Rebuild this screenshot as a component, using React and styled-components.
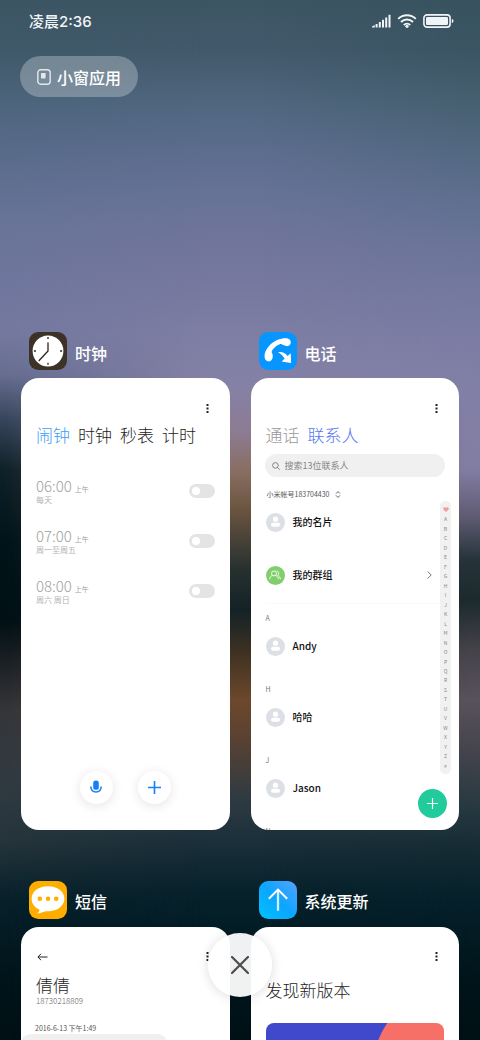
import React from "react";
import styled, { createGlobalStyle, css } from "styled-components";

const GlobalStyle = createGlobalStyle`
	* {
		box-sizing: border-box;
	}
	body {
		margin: 0;
		background: #00131a;
		font-family: "Noto Sans CJK SC", "Noto Sans", sans-serif;
	}
	button,
	input {
		font-family: inherit;
		border: none;
		padding: 0;
		margin: 0;
	}
	h1, h2, p, ul {
		margin: 0;
		padding: 0;
	}
	svg {
		display: block;
	}
`;

// page
const Screen = styled.div`
	position: relative;
	isolation: isolate;
	height: 100vh;
	overflow: hidden;
	/* wallpaper: centre column, the sides are laid over it */
	background: linear-gradient(
		180deg,
		#3c5563 0,
		#42596b 50px,
		#50677f 105px,
		#5c6d8e 150px,
		#677297 195px,
		#70759c 240px,
		#77799f 290px,
		#7d7ea4 330px,
		#8581a6 385px,
		#8c7c94 430px,
		#8a6e63 470px,
		#6a543f 510px,
		#26302f 570px,
		#142226 610px,
		#3c3022 650px,
		#6c482c 700px,
		#5c4231 735px,
		#2e3a42 800px,
		#1b303a 840px,
		#08222c 890px,
		#001a23 950px,
		#001014 1040px
	);

	&::before,
	&::after {
		content: "";
		position: absolute;
		z-index: -1;
		inset: 0;
	}
	&::before {
		background: linear-gradient(
			180deg,
			#3c5563 0,
			#3f596a 50px,
			#4d657d 105px,
			#5a6c8c 160px,
			#687397 220px,
			#6f769d 280px,
			#74789e 335px,
			#666d91 375px,
			#36455a 420px,
			#0e2029 470px,
			#001419 540px,
			#001014 620px,
			#1d2126 665px,
			#343539 710px,
			#303a41 780px,
			#26343b 840px,
			#06202a 900px,
			#00141a 980px,
			#001014 1040px
		);
		mask-image: linear-gradient(90deg, #000 1%, transparent 42%);
	}
	&::after {
		background: linear-gradient(
			180deg,
			#38535f 0,
			#3b5564 50px,
			#465f70 100px,
			#526880 150px,
			#5f6f90 200px,
			#6c7599 250px,
			#7579a0 300px,
			#7c7da4 345px,
			#827fa6 400px,
			#817ca2 470px,
			#615d75 515px,
			#26333a 560px,
			#1c2a2d 600px,
			#45424a 650px,
			#58525b 700px,
			#45444d 750px,
			#253840 810px,
			#142b33 850px,
			#05202a 900px,
			#00141a 980px,
			#001014 1040px
		);
		mask-image: linear-gradient(90deg, transparent 55%, #000 98%);
	}
`;

const StatusBar = styled.header`
	display: flex;
	align-items: center;
	justify-content: space-between;
	height: 42px;
	padding: 0 26px 0 29px;
	color: #f1f4f6;
`;

const StatusTime = styled.span`
	padding-top: 2px;
	font-family: Inter, "Noto Sans CJK SC", sans-serif;
	font-size: 15px;
	font-weight: 500;
	line-height: 20px;
`;

const StatusIcons = styled.div`
	display: flex;
	align-items: center;
	gap: 6px;
`;

const WindowButton = styled.button`
	display: flex;
	align-items: center;
	gap: 6px;
	height: 41px;
	margin: 14px 0 0 20px;
	padding: 0 17px;
	border-radius: 21px;
	background: rgba(255, 255, 255, 0.27);
	color: #fff;
	font-size: 16px;
	font-weight: 500;
`;

const Recents = styled.main`
	display: grid;
	grid-template-columns: 1fr 1fr;
	gap: 51px 21px;
	margin-top: 235px;
	padding: 0 21px;
`;

const AppTitle = styled.div`
	display: flex;
	align-items: center;
	gap: 8px;
	margin: 0 8px 8px;
	color: #fff;

	h2 {
		padding-top: 3px;
		font-size: 16px;
		font-weight: 500;
		line-height: 24px;
		white-space: nowrap;
	}
`;

const Card = styled.article`
	position: relative;
	display: flex;
	flex-direction: column;
	aspect-ratio: 6 / 13;
	min-height: 0;
	overflow: hidden;
	border-radius: 18px;
	background: #fff;
	color: #1c1c1c;
`;

const CardBar = styled.div`
	display: flex;
	align-items: center;
	height: 12px;
	margin: 24px 21px 0 16px;
`;

const IconButton = styled.button`
	display: grid;
	place-items: center;
	background: none;
	color: #222;
	margin-left: ${(props) => (props.$end ? "auto" : "0")};
`;

const Tabs = styled.nav`
	display: flex;
	gap: 8px;
	margin: 9px 0 0 15px;
`;

const Tab = styled.button`
	background: none;
	color: ${(props) => props.$color || "#1c1c1c"};
	font-size: 17px;
	font-weight: 300;
	line-height: 24px;
	white-space: nowrap;
`;

// clock
const Alarms = styled.ul`
	display: flex;
	flex-direction: column;
	gap: 22px;
	margin: 30px 15px 0;
	list-style: none;
`;

const Alarm = styled.li`
	display: flex;
	align-items: center;
	justify-content: space-between;
	color: #b2b2b2;
`;

const AlarmLabel = styled.label`
	display: flex;
	flex-direction: column;
`;

const AlarmTime = styled.span`
	display: flex;
	align-items: baseline;
	gap: 3px;
	font-size: 15px;
	font-weight: 300;
	line-height: 18px;
	color: #a0a0a0;

	small {
		font-size: 7px;
		font-weight: 400;
		line-height: 8px;
	}
`;

const AlarmDays = styled.span`
	font-size: 8px;
	line-height: 10px;
`;

const Toggle = styled.input`
	appearance: none;
	display: flex;
	align-items: center;
	width: 26px;
	height: 14px;
	padding-left: 3px;
	border-radius: 7px;
	background: #e4e4e4;

	&::before {
		content: "";
		width: 8px;
		height: 8px;
		border-radius: 50%;
		background: #fff;
	}
	&:checked {
		justify-content: flex-end;
		background: #1a82f7;
	}
`;

const ClockActions = styled.div`
	display: flex;
	justify-content: center;
	gap: 25px;
	margin: auto 0 26px;
`;

const RoundButton = styled.button`
	display: grid;
	place-items: center;
	width: 33px;
	height: 33px;
	border-radius: 50%;
	background: #fff;
	color: #1a7ff5;
	box-shadow: 0 2px 12px rgba(0, 0, 0, 0.11);
`;

// contacts
const Search = styled.label`
	display: flex;
	align-items: center;
	gap: 5px;
	height: 23px;
	margin: 7px 14px 0;
	padding: 0 7px;
	border-radius: 12px;
	background: #f0f0f0;
	color: #777;

	input {
		flex: 1;
		min-width: 0;
		background: none;
		font-size: 9px;
		line-height: 14px;
		outline: none;
	}
	input::placeholder {
		color: #858585;
		opacity: 1;
	}
`;

const Account = styled.button`
	display: flex;
	align-items: center;
	gap: 6px;
	height: 8px;
	margin: 13px 0 0 16px;
	background: none;
	color: #555;
	font-size: 7px;
	line-height: 8px;
`;

const ContactsBody = styled.div`
	display: flex;
	flex: 1;
	min-height: 0;
	padding: 0 8px 0 15px;
`;

const ContactList = styled.ul`
	flex: 1;
	list-style: none;
`;

const contactRow = css`
	display: flex;
	align-items: center;
	gap: 8px;
	font-size: 10px;
	font-weight: 500;
	line-height: 20px;
	color: #111;
`;

const Contact = styled.li`
	${contactRow}
	height: 53px;
	padding: 0 8px 4px 0;
	border-bottom: 1px solid ${(props) => (props.$ruled ? "#fafafa" : "transparent")};
`;

const ContactName = styled.span`
	flex: 1;
`;

const Letter = styled.li`
	height: 18px;
	padding-top: 7px;
	font-size: 7px;
	line-height: 14px;
	color: #777;
`;

const Avatar = styled.span`
	display: grid;
	place-items: center;
	width: 19px;
	height: 19px;
	border-radius: 50%;
	background: ${(props) => (props.$group ? "#80ce6c" : "#dcdfe5")};
`;

const IndexBar = styled.nav`
	display: flex;
	flex-direction: column;
	align-items: center;
	justify-content: space-between;
	width: 11px;
	height: 273px;
	margin-top: 3px;
	padding: 4px 0;
	border-radius: 6px;
	background: #f1f1f1;
	color: #858585;
	font-size: 5px;
	line-height: 9px;
`;

const IndexLink = styled.a`
	display: grid;
	place-items: center;
	height: 9px;
	color: inherit;
	text-decoration: none;
`;

const AddContact = styled.button`
	position: absolute;
	right: 12px;
	bottom: 12px;
	display: grid;
	place-items: center;
	width: 29px;
	height: 29px;
	border-radius: 50%;
	background: #21cb9c;
	color: #fff;
`;

// messages
const Sender = styled.h1`
	margin: 10px 15px 0;
	font-size: 17px;
	font-weight: 300;
	line-height: 24px;
	color: #222;
`;

const Phone = styled.p`
	margin: 0 15px;
	font-size: 8px;
	font-weight: 300;
	line-height: 8px;
	color: #666;
`;

const MessageDate = styled.p`
	margin: 17px 14px 0;
	font-size: 7px;
	line-height: 12px;
	color: #555;
`;

const Bubble = styled.div`
	width: 70%;
	height: 60px;
	border-radius: 9px;
	background: #f0f0f0;
`;

// system update
const UpdateTitle = styled.h1`
	margin: 15px 15px 0;
	font-size: 17px;
	font-weight: 300;
	line-height: 24px;
`;

const Banner = styled.div`
	height: 120px;
	margin: 21px 15px 0;
	overflow: hidden;
	border-radius: 8px;
	background: radial-gradient(circle at 184px 44px, #f77068 76px, #4048cb 77px);
`;

const CloseButton = styled.button`
	position: absolute;
	bottom: 43px;
	left: 50%;
	display: grid;
	place-items: center;
	width: 64px;
	height: 64px;
	margin-left: -32px;
	border-radius: 50%;
	background: rgba(255, 255, 255, 0.94);
	box-shadow: 0 1px 12px rgba(0, 0, 0, 0.14);
	color: #4c4c4c;
`;

const alarms = [
	{ time: "06:00", days: "每天" },
	{ time: "07:00", days: "周一至周五" },
	{ time: "08:00", days: "周六 周日" },
];

const people = [
	{ letter: "A", name: "Andy" },
	{ letter: "H", name: "哈哈" },
	{ letter: "J", name: "Jason" },
];

const letters = "ABCDEFGHIJKLMNOPQRSTUVWXYZ#".split("");

const Signal = () => (
	<svg width='19' height='14' viewBox='0 0 19 14' fill='currentColor'>
		<path d='M0 13.5V12.4L2.7 11v2.5z' />
		<rect x='3.6' y='10' width='2' height='3.5' />
		<rect x='6.8' y='8' width='2' height='5.5' />
		<rect x='10' y='5.8' width='2' height='7.7' />
		<rect x='13.2' y='3.5' width='2' height='10' />
		<rect x='16.5' y='.8' width='2' height='12.7' />
	</svg>
);

const Wifi = () => (
	<svg width='20' height='14' viewBox='0 0 20 14' fill='none' stroke='currentColor' strokeWidth='2'>
		<path d='M1.2 4.9a12.6 12.6 0 0 1 17.6 0M4 8a8.6 8.6 0 0 1 12 0M6.8 10.9a4.7 4.7 0 0 1 6.4 0' />
		<circle cx='10' cy='12.3' r='1.6' fill='currentColor' stroke='none' />
	</svg>
);

const Battery = () => (
	<svg width='31' height='14' viewBox='0 0 31 14'>
		<rect x='.9' y='.9' width='26.2' height='12.2' rx='3.2' fill='none' stroke='currentColor' strokeWidth='1.6' />
		<rect x='3' y='3' width='22' height='8' rx='1.2' fill='currentColor' />
		<path d='M28.8 5c1.2.3 1.7 1 1.7 2s-.5 1.7-1.7 2z' fill='currentColor' />
	</svg>
);

const MiniWindow = () => (
	<svg width='14' height='16' viewBox='0 0 14 16'>
		<rect x='.8' y='.8' width='12.4' height='14.4' rx='3' fill='none' stroke='#e2e7ed' strokeWidth='1.4' />
		<rect x='4' y='4' width='4.6' height='5.4' rx='.6' fill='#e2e7ed' />
	</svg>
);

const ClockLogo = () => (
	<svg width='38' height='38' viewBox='0 0 116 116'>
		<rect width='116' height='116' rx='28' fill='#3d3227' />
		<circle cx='58' cy='58' r='47' fill='#fff' />
		<g stroke='#2a2622' strokeWidth='4' fill='none'>
			<path d='M58 33v25L31 87' strokeLinecap='round' strokeLinejoin='round' />
			<path d='M58 15v6M58 94v6M15 58h6M95 58h6' />
		</g>
	</svg>
);

const PhoneLogo = () => (
	<svg width='38' height='38' viewBox='0 0 116 116'>
		<rect width='116' height='116' rx='28' fill='#0795ff' />
		<g fill='#fff'>
			<path d='M17 75C17 48 48 19 80 19c12 0 18 6 17 14-1 8-8 11-14 10l-9-3c-5-2-5-4-9-3-12 4-22 13-26 22-2 4 3 7 3 12 1 11-5 19-12 19S17 85 17 75z' />
			<path d='M58 62c11-3 22 2 29 11l10-8 1 30-29-5 9-8c-4-9-11-15-20-20z' />
		</g>
	</svg>
);

const MessageLogo = () => (
	<svg width='38' height='38' viewBox='0 0 116 116'>
		<rect width='116' height='116' rx='28' fill='#ffae00' />
		<path d='M58 16c29 0 50 16 50 38S87 92 58 92c-6 0-10 0-15 3-6 3-10 4-18 4 4-3 7-7 7-12C17 81 8 69 8 54c0-22 21-38 50-38z' fill='#fff' />
		<g fill='#ffae00'>
			<circle cx='33' cy='54' r='7' />
			<circle cx='58' cy='54' r='7' />
			<circle cx='83' cy='54' r='7' />
		</g>
	</svg>
);

const UpdateLogo = () => (
	<svg width='38' height='38' viewBox='0 0 116 116'>
		<defs>
			<linearGradient id='update' x1='0' y1='1' x2='1' y2='0'>
				<stop offset='0' stopColor='#00c3ff' />
				<stop offset='.5' stopColor='#0ba6ff' />
				<stop offset='1' stopColor='#57a2ff' />
			</linearGradient>
		</defs>
		<rect width='116' height='116' rx='28' fill='url(#update)' />
		<path d='M58 91V26' stroke='#d5efff' strokeWidth='7' />
		<path d='M30 54l28-28 28 28' fill='none' stroke='#fff' strokeWidth='6' />
	</svg>
);

const Dots = () => (
	<svg width='3' height='9' viewBox='0 0 3 9' fill='currentColor'>
		<rect x='.5' width='2' height='2' />
		<rect x='.5' y='3.5' width='2' height='2' />
		<rect x='.5' y='7' width='2' height='2' />
	</svg>
);

const Plus = ({ size, width }) => (
	<svg width={size} height={size} viewBox='0 0 12 12' stroke='currentColor' strokeWidth={width}>
		<path d='M6 0v12M0 6h12' />
	</svg>
);

const Mic = () => (
	<svg width='12' height='14' viewBox='0 0 12 14'>
		<rect x='3.2' y='.5' width='5.6' height='9.3' rx='2.6' fill='currentColor' />
		<path d='M.8 6.5C1 10 3.2 12 6 12s5-2 5.2-5.5' fill='none' stroke='currentColor' strokeWidth='1.5' />
	</svg>
);

const Person = () => (
	<svg width='11' height='12' viewBox='0 0 11 12' fill='#fff'>
		<circle cx='5.5' cy='3.2' r='2.6' />
		<rect x='1' y='6.8' width='9' height='4' rx='2' />
	</svg>
);

const Group = () => (
	<svg width='12' height='10' viewBox='0 0 12 10' fill='none' stroke='#fff' strokeWidth='.9'>
		<circle cx='5' cy='3.4' r='2.5' />
		<path d='M.6 9.2C.8 7 2 5.9 3.6 5.5M6.4 5.5C8 5.9 9.2 7 9.4 9.2M7.6 1c2.4.2 2.9 3.3 1 4.4 1.6.6 2.6 1.7 2.8 3.8' />
	</svg>
);

function TaskTitle({ logo, children }) {
	return (
		<AppTitle>
			{logo}
			<h2>{children}</h2>
		</AppTitle>
	);
}

function MenuButton() {
	return (
		<IconButton $end aria-label='更多'>
			<Dots />
		</IconButton>
	);
}

function ClockTask() {
	return (
		<section>
			<TaskTitle logo={<ClockLogo />}>时钟</TaskTitle>
			<Card>
				<CardBar>
					<MenuButton />
				</CardBar>
				<Tabs>
					<Tab $color='#3b9df5'>闹钟</Tab>
					<Tab>时钟</Tab>
					<Tab>秒表</Tab>
					<Tab>计时</Tab>
				</Tabs>
				<Alarms>
					{alarms.map((alarm) => (
						<Alarm key={alarm.time}>
							<AlarmLabel htmlFor={alarm.time}>
								<AlarmTime>
									{alarm.time}
									<small>上午</small>
								</AlarmTime>
								<AlarmDays>{alarm.days}</AlarmDays>
							</AlarmLabel>
							<Toggle type='checkbox' id={alarm.time} />
						</Alarm>
					))}
				</Alarms>
				<ClockActions>
					<RoundButton aria-label='语音'>
						<Mic />
					</RoundButton>
					<RoundButton aria-label='添加闹钟'>
						<Plus size={13} width={1.5} />
					</RoundButton>
				</ClockActions>
			</Card>
		</section>
	);
}

function ContactsTask() {
	return (
		<section>
			<TaskTitle logo={<PhoneLogo />}>电话</TaskTitle>
			<Card>
				<CardBar>
					<MenuButton />
				</CardBar>
				<Tabs>
					<Tab $color='#999'>通话</Tab>
					<Tab $color='#5277ef'>联系人</Tab>
				</Tabs>
				<Search>
					<svg width='8' height='8' viewBox='0 0 8 8' fill='none' stroke='currentColor' strokeWidth='.9'>
						<circle cx='3.4' cy='3.4' r='2.8' />
						<path d='M5.5 5.5l2.2 2.2' />
					</svg>
					<input type='search' placeholder='搜索13位联系人' aria-label='搜索联系人' />
				</Search>
				<Account>
					小米帐号183704430
					<svg width='6' height='7' viewBox='0 0 6 7' fill='none' stroke='currentColor' strokeWidth='.9'>
						<path d='M1 2.6l2-2 2 2M1 4.4l2 2 2-2' />
					</svg>
				</Account>
				<ContactsBody>
					<ContactList>
						<Contact>
							<Avatar>
								<Person />
							</Avatar>
							<ContactName>我的名片</ContactName>
						</Contact>
						<Contact $ruled>
							<Avatar $group>
								<Group />
							</Avatar>
							<ContactName>我的群组</ContactName>
							<svg width='5' height='8' viewBox='0 0 5 8' fill='none' stroke='#777' strokeWidth='1'>
								<path d='M.7.5L4.2 4 .7 7.5' />
							</svg>
						</Contact>
						{people.map((person) => (
							<React.Fragment key={person.name}>
								<Letter>{person.letter}</Letter>
								<Contact>
									<Avatar>
										<Person />
									</Avatar>
									<ContactName>{person.name}</ContactName>
								</Contact>
							</React.Fragment>
						))}
						<Letter>N</Letter>
					</ContactList>
					<IndexBar aria-label='索引'>
						<IndexLink href='#fav' aria-label='收藏'>
							<svg width='6' height='5' viewBox='0 0 6 5' fill='#f49a9a'>
								<path d='M3 5L.5 2.6C-.6 1 1.4-.8 3 .8 4.6-.8 6.6 1 5.5 2.6z' />
							</svg>
						</IndexLink>
						{letters.map((letter) => (
							<IndexLink href={`#${letter}`} key={letter}>
								{letter}
							</IndexLink>
						))}
					</IndexBar>
				</ContactsBody>
				<AddContact aria-label='新建联系人'>
					<Plus size={11} width={1.3} />
				</AddContact>
			</Card>
		</section>
	);
}

function MessagesTask() {
	return (
		<section>
			<TaskTitle logo={<MessageLogo />}>短信</TaskTitle>
			<Card>
				<CardBar>
					<IconButton aria-label='返回'>
						<svg width='11' height='8' viewBox='0 0 11 8' fill='none' stroke='currentColor' strokeWidth='1'>
							<path d='M10.5 4H1M4 .8L.9 4 4 7.2' />
						</svg>
					</IconButton>
					<MenuButton />
				</CardBar>
				<Sender>倩倩</Sender>
				<Phone>18730218809</Phone>
				<MessageDate>2016-6-13 下午1:49</MessageDate>
				<Bubble />
			</Card>
		</section>
	);
}

function UpdateTask() {
	return (
		<section>
			<TaskTitle logo={<UpdateLogo />}>系统更新</TaskTitle>
			<Card>
				<CardBar>
					<MenuButton />
				</CardBar>
				<UpdateTitle>发现新版本</UpdateTitle>
				<Banner />
			</Card>
		</section>
	);
}

export default function App() {
	return (
		<Screen>
			<GlobalStyle />
			<StatusBar>
				<StatusTime>凌晨2:36</StatusTime>
				<StatusIcons>
					<Signal />
					<Wifi />
					<Battery />
				</StatusIcons>
			</StatusBar>
			<WindowButton>
				<MiniWindow />
				小窗应用
			</WindowButton>
			<Recents>
				<ClockTask />
				<ContactsTask />
				<MessagesTask />
				<UpdateTask />
			</Recents>
			<CloseButton aria-label='关闭'>
				<svg width='18' height='18' viewBox='0 0 18 18' stroke='currentColor' strokeWidth='2.2' strokeLinecap='round'>
					<path d='M1 1l16 16M17 1L1 17' />
				</svg>
			</CloseButton>
		</Screen>
	);
}
